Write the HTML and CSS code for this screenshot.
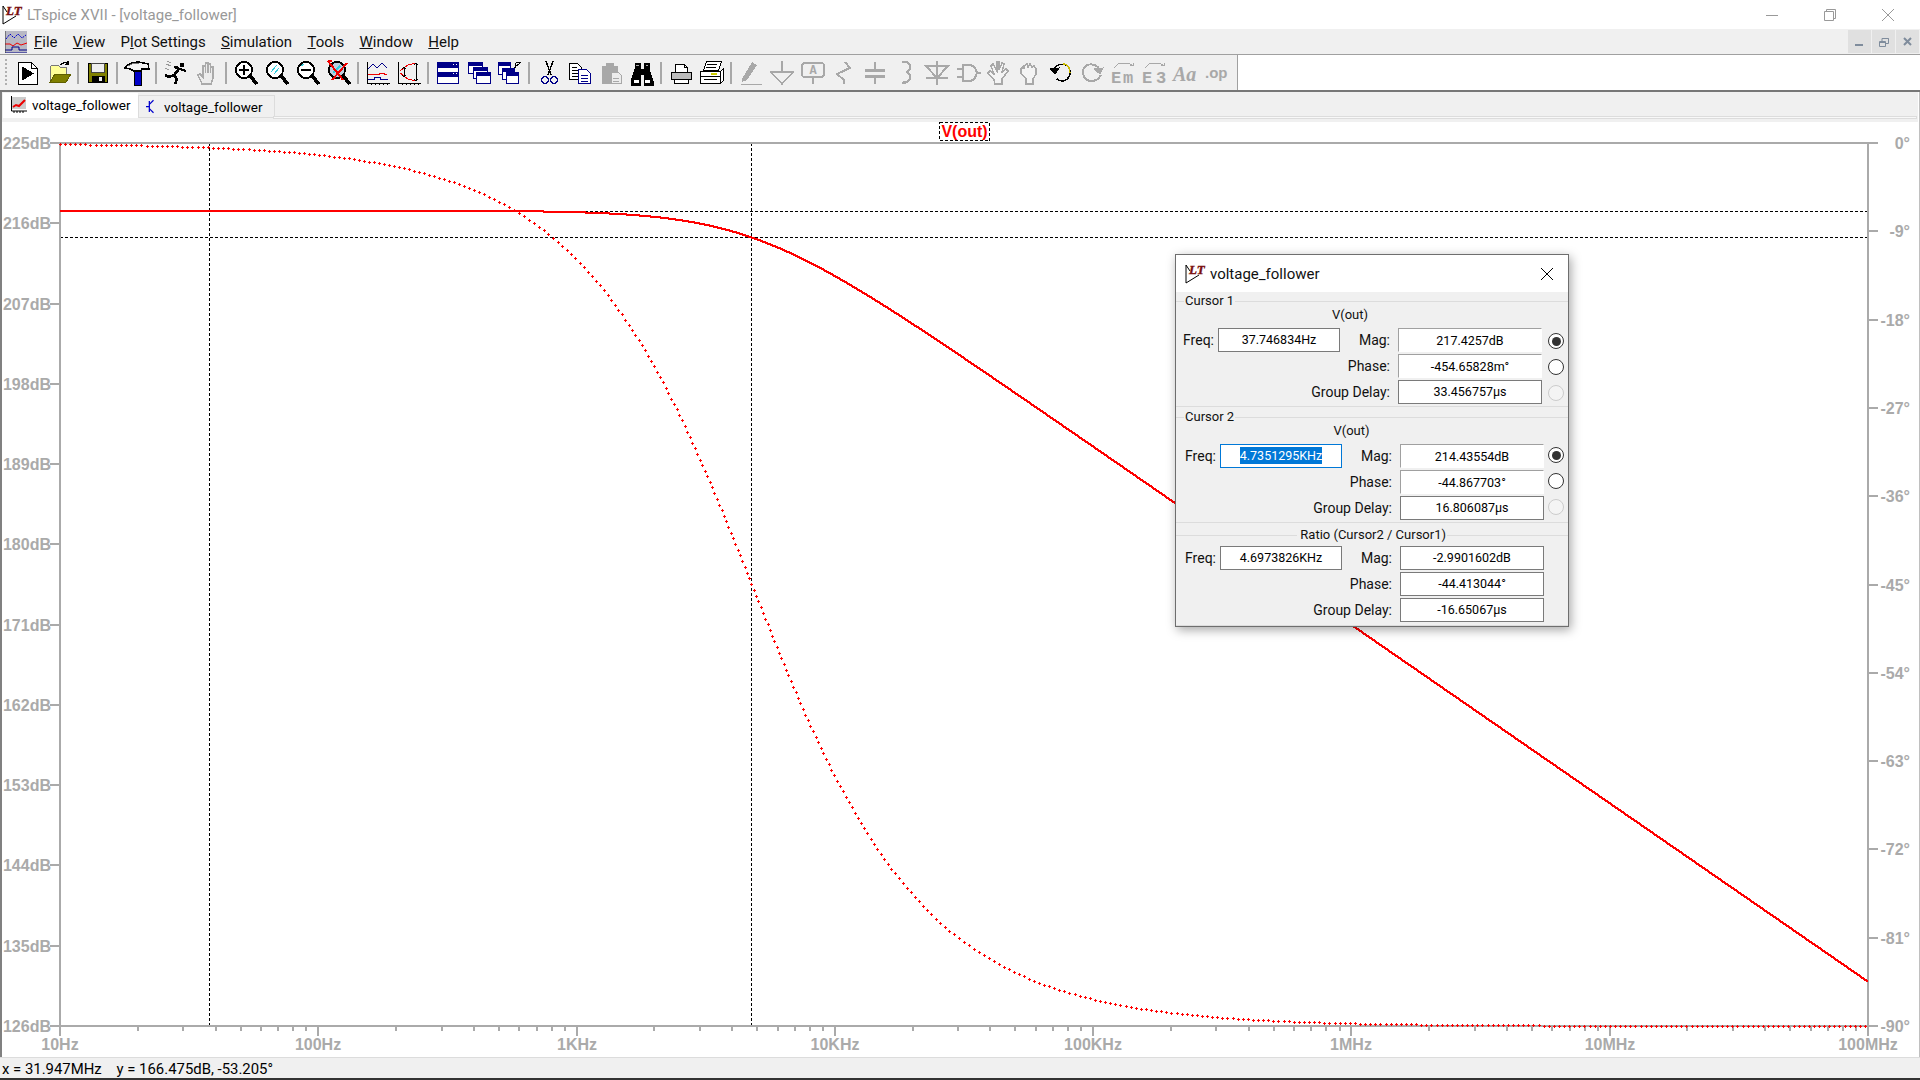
FILE: index.html
```html
<!DOCTYPE html>
<html lang="en">
<head>
    <meta charset="UTF-8">
    <title>LTspice XVII - [voltage_follower]</title>
    <link rel="stylesheet" href="styles.css">
</head>
<body>
    <div class="titlebar">
        <svg class="logo" viewBox="0 0 20 20"><path d="M1 1v18l13-8" fill="#fff" stroke="#000"/><path d="M1 1l4 6" stroke="#000"/><text x="4" y="10" class="logo-lt">LT</text></svg>
        <span class="title-text">LTspice XVII - [voltage_follower]</span>
        <div class="win-btns">
            <svg class="win-btn" viewBox="0 0 12 12"><path d="M0 6.500h12"/></svg>
            <svg class="win-btn" viewBox="0 0 12 12"><path d="M.5 2.500h9v9h-9zM2.500 2.500v-2h9v9h-2"/></svg>
            <svg class="win-btn" viewBox="0 0 12 12"><path d="M0 0l12 12M12 0L0 12"/></svg>
        </div>
    </div>

    <div class="menubar">
        <svg class="menu-ico" viewBox="0 0 22 22"><rect width="22" height="22" fill="#b8b8c4"/><path d="M1 8l4-5 4 4 4-4 4 4 4-3" stroke="#00c" stroke-dasharray="2 1" fill="none"/><path d="M0 13h5l3 2 4-3 4 2 6-2" stroke="#e00" fill="none"/><path d="M0 19h7v-3h7v3h8M0 22h22" stroke="#008" fill="none"/><path d="M0 0v22" stroke="#333"/></svg>
        <div class="menu-item"><u>F</u>ile</div>
        <div class="menu-item"><u>V</u>iew</div>
        <div class="menu-item">P<u>l</u>ot Settings</div>
        <div class="menu-item"><u>S</u>imulation</div>
        <div class="menu-item"><u>T</u>ools</div>
        <div class="menu-item"><u>W</u>indow</div>
        <div class="menu-item"><u>H</u>elp</div>
        <div class="mdi-btns">
            <div class="mdi-btn"><svg viewBox="0 0 10 10"><path d="M0 8h8" stroke-width="2"/></svg></div>
            <div class="mdi-btn"><svg viewBox="0 0 10 10"><path d="M.5 4.500h6v5h-6zM.5 5.500h6M3 4V1.500h6.500v5H7M3 1.500h6.500" stroke-width="1"/></svg></div>
            <div class="mdi-btn"><svg viewBox="0 0 10 10"><path d="M1 1l7 7M8 1L1 8" stroke-width="2"/></svg></div>
        </div>
    </div>

    <div class="toolbar-row">
        <div class="toolbar">
            <div class="grip"></div>
            <div class="tb"><svg class="ico" viewBox="0 0 26 26"><path d="M3.500 2.500h13l6 6v16h-19z" fill="#fff"/><path d="M16.500 2.500v6h6"/><path d="M7 7l11 6.500L7 20z" fill="#000"/></svg></div>
            <div class="tb"><svg class="ico" viewBox="0 0 26 26"><path d="M4 21V7l2-2h6l2 2h6v7" fill="#ffff99" stroke="#777"/><path d="M4 22l5-8h16l-5 8z" fill="#808000" stroke="#606000"/><path d="M15 5c2-3 5-3 7-1M22 1v3.500h-3.500" stroke-width="1.500"/></svg></div>
            <div class="sep"></div>
            <div class="tb"><svg class="ico" viewBox="0 0 26 26"><path d="M3.500 3.500h19v19h-19z" fill="#808000" stroke-width="1.500"/><rect x="6.500" y="3.500" width="13" height="9" fill="#eee" stroke="#444"/><rect x="7" y="16" width="12" height="6.500" fill="#000"/><rect x="14" y="17" width="3" height="4" fill="#eee" stroke="none"/></svg></div>
            <div class="sep"></div>
            <div class="tb"><svg class="ico" viewBox="0 0 26 26"><path d="M1 8C4 3 10 2 15 2l9 2 1 5h-7l-1 2H10C7 9 4 8 1 8z" fill="#f4f4f4" stroke-width="1.500"/><path d="M4 6c3-2 7-3 11-3" stroke="#777"/><rect x="10" y="11" width="7" height="14" fill="#0000c8" stroke="#000"/></svg></div>
            <div class="sep"></div>
            <div class="tb"><svg class="ico" viewBox="0 0 26 26"><path d="M3 4l5 2M2 8l4 2M4 1l4 2" stroke="#999"/><circle cx="19" cy="5" r="2" fill="#000"/><path d="M17 8L11 15l3 4-2 5M11 15l-5 2-4-2M16 8l-5-1M17 9l6 2" stroke-width="2.500"/></svg></div>
            <div class="tb"><svg class="ico" viewBox="0 0 26 26"><path d="M8 24L4 15l2-1 3 3V6h2.500v7V3h2.500v10V4h2.500v9V7h2.500v11l-2 6z" fill="#ececec" stroke="#aaa" stroke-width="1.500"/></svg></div>
            <div class="sep"></div>
            <div class="tb"><svg class="ico" viewBox="0 0 26 26"><circle cx="11" cy="10" r="8" fill="#fff" stroke-width="2"/><path d="M6 10h10M11 5v10" stroke-width="2.500"/><path d="M17 16l7 8" stroke-width="3.500"/></svg></div>
            <div class="tb"><svg class="ico" viewBox="0 0 26 26"><circle cx="11" cy="10" r="8" fill="#fff" stroke-width="2"/><path d="M7 12l6-7M10 14l5-6" stroke="#3cd"/><path d="M17 16l7 8" stroke-width="3.500"/></svg></div>
            <div class="tb"><svg class="ico" viewBox="0 0 26 26"><circle cx="11" cy="10" r="8" fill="#fff" stroke-width="2"/><path d="M6 10h10" stroke-width="2.500"/><path d="M6 6l3-2" stroke="#3cd"/><path d="M17 16l7 8" stroke-width="3.500"/></svg></div>
            <div class="tb"><svg class="ico" viewBox="0 0 26 26"><circle cx="11" cy="10" r="8" fill="#bcd" stroke-width="2"/><path d="M7 13l7-7" stroke="#3cd" stroke-width="2"/><path d="M17 16l7 8" stroke-width="3.500"/><path d="M2 1l15 19M21 3L6 20M2 1h4" stroke="#e00" stroke-width="2"/></svg></div>
            <div class="sep"></div>
            <div class="tb"><svg class="ico" viewBox="0 0 26 26"><path d="M2.500 2v21h22M6 23v2M10 23v2M14 23v2M18 23v2M22 23v2"/><path d="M3 9l5-5 4 4 5-5 5 5" stroke="#008"/><path d="M3 14h5l4 1 5-2 5 2" stroke="#e00"/><path d="M3 19h6v-2h6v2h8" stroke="#008"/></svg></div>
            <div class="tb"><svg class="ico" viewBox="0 0 26 26"><path d="M2.500 2v21h22M6 23v2M10 23v2M14 23v2M18 23v2M22 23v2"/><path d="M4 11l8-6 8-2M4 13l8 6 8 2" stroke="#e00"/><path d="M8 7v10M20 3v18M8 7l-2 2M8 7l2 2M8 17l-2-2M8 17l2-2M20 3l-2 2M20 3l2 2M20 21l-2-2M20 21l2-2"/></svg></div>
            <div class="sep"></div>
            <div class="tb"><svg class="ico nv" viewBox="0 0 26 26"><rect x="2.500" y="2.500" width="21" height="21" fill="#fff"/><rect x="3" y="3" width="20" height="5" fill="#008" stroke="none"/><rect x="3" y="12" width="20" height="5" fill="#008" stroke="none"/><path d="M18 4.500h1M21 4.500h1M18 13.500h1M21 13.500h1" stroke="#fff"/></svg></div>
            <div class="tb"><svg class="ico nv" viewBox="0 0 26 26"><rect x="2.500" y="2.500" width="14" height="11" fill="#fff"/><rect x="3" y="3" width="14" height="3" fill="#008" stroke="none"/><rect x="7.500" y="7.500" width="14" height="11" fill="#fff"/><rect x="8" y="8" width="14" height="3" fill="#008" stroke="none"/><rect x="10.500" y="12.500" width="14" height="11" fill="#fff"/><rect x="11" y="13" width="14" height="3" fill="#008" stroke="none"/></svg></div>
            <div class="tb"><svg class="ico nv" viewBox="0 0 26 26"><rect x="1.500" y="2.500" width="12" height="12" fill="#fff"/><rect x="2" y="3" width="12" height="3" fill="#008" stroke="none"/><rect x="5.500" y="8.500" width="12" height="11" fill="#fff"/><rect x="6" y="9" width="12" height="3" fill="#008" stroke="none"/><rect x="9.500" y="12.500" width="12" height="11" fill="#fff"/><rect x="10" y="13" width="12" height="3" fill="#008" stroke="none"/><path d="M17 7l7-5M24 2h-5M18 2v5" stroke="#000" transform="translate(0 .5)"/></svg></div>
            <div class="sep"></div>
            <div class="tb"><svg class="ico" viewBox="0 0 26 26"><path d="M10 1l5 14M17 1l-5 14" stroke-width="1.500"/><circle cx="9" cy="20" r="3.500" stroke="#008" stroke-width="1.500"/><circle cx="18" cy="20" r="3.500" stroke="#008" stroke-width="1.500"/></svg></div>
            <div class="tb"><svg class="ico" viewBox="0 0 26 26"><path d="M2.500 3.500h8l4 4v12h-12zM5 7h5M5 10h6M5 13h6M5 16h6" fill="#fff"/><path d="M11.500 9.500h8l4 4v10h-12z" fill="#fff" stroke="#008"/><path d="M14 15h7M14 18h7M14 21h7" stroke="#008"/></svg></div>
            <div class="tb"><svg class="ico" viewBox="0 0 26 26"><path d="M4 6h4V3h7v3h4v17H4z" fill="#a8a8a8" stroke="#a8a8a8"/><path d="M13.500 12.500h7l3 3v8h-10z" fill="#ececec" stroke="#a8a8a8"/><path d="M15 18h6M15 21h6" stroke="#a8a8a8"/></svg></div>
            <div class="tb"><svg class="ico" viewBox="0 0 26 26"><path d="M6 3h5v6h4V3h5v6l4 12v4h-9V14h-4v11H2v-4L6 9z" fill="#000"/><path d="M5 20h5v3H5zM16 20h5v3h-5z" fill="#fff" stroke="none"/><path d="M7 5h3M17 5h2" stroke="#aaa"/></svg></div>
            <div class="sep"></div>
            <div class="tb"><svg class="ico" viewBox="0 0 26 26"><path d="M7.500 4.500h9l3 3v5h-12z" fill="#fff"/><path d="M16.500 4.500v3h3"/><rect x="3.500" y="12.500" width="20" height="7" fill="#bbb"/><path d="M6.500 19.500h14v4h-14z" fill="#fff"/></svg></div>
            <div class="tb"><svg class="ico" viewBox="0 0 26 26"><path d="M7.500 1.500h15l-3 9h-15z" fill="#fff"/><path d="M8 4h10M7 7h10"/><path d="M1.500 11.500h20l3-3v12l-3 3h-20z" fill="#fff"/><path d="M1.500 16.500h20v7M21.500 11.500v5M5 19h13"/><path d="M12 14h6" stroke="#cc0" stroke-width="2"/></svg></div>
            <div class="sep"></div>
            <div class="tb"><svg class="ico gr" viewBox="0 0 26 26"><path d="M4 19L14 2l5 3-10 15-5 2z" fill="#a8a8a8" stroke="none"/><path d="M3 24h21"/></svg></div>
            <div class="tb"><svg class="ico gr" viewBox="0 0 26 26"><path d="M13 1v11M2 12h22L13 24z" stroke-width="1.500"/></svg></div>
            <div class="tb"><svg class="ico gr" viewBox="0 0 26 26"><rect x="2" y="3" width="22" height="14" rx="3" stroke-width="2"/><text x="13" y="14" class="ico-a">A</text><path d="M13 17v7" stroke-width="2"/></svg></div>
            <div class="tb"><svg class="ico gr" viewBox="0 0 26 26"><path d="M14 2l5 6L6 14l7 6v4" stroke-width="2"/></svg></div>
            <div class="tb"><svg class="ico gr" viewBox="0 0 26 26"><path d="M13 2v7M13 17v7" stroke-width="2"/><path d="M3 10h20M3 16h20" stroke-width="3"/></svg></div>
            <div class="tb"><svg class="ico gr" viewBox="0 0 26 26"><path d="M9 2h5l3 3v4l-3 3 3 3v4l-3 3-5 1" stroke-width="2.500"/></svg></div>
            <div class="tb"><svg class="ico gr" viewBox="0 0 26 26"><path d="M13 1v24M2 18h22M2 6h22L13 18z" stroke-width="2"/></svg></div>
            <div class="tb"><svg class="ico gr" viewBox="0 0 26 26"><path d="M8 5h6c5 0 7 4 8 8-1 4-3 8-8 8H8zM2 9h6M2 17h6M22 13h4" stroke-width="2"/></svg></div>
            <div class="tb"><svg class="ico gr" viewBox="0 0 26 26"><path d="M9 24l-1-4-6-7 2-2 4 3-3-8 2-2 4 7V2h2v8l3-7 2 1-2 8 4-3 2 2-6 8v5z" fill="#f4f4f4" stroke-width="1.500"/></svg></div>
            <div class="tb"><svg class="ico gr" viewBox="0 0 26 26"><path d="M9 24v-5l-5-6V9l2-2 1 2V6l3-2 1 3 2-3 2 3 2-1 2 3v5l-3 5v5z" fill="#f4f4f4" stroke-width="1.500"/></svg></div>
            <div class="tb"><svg class="ico" viewBox="0 0 26 26"><path d="M6 9c3-6 12-6 15-1 3 6-1 13-7 13-2 0-4-1-5-2" stroke-width="1.500"/><path d="M15 4c3 0 5 2 6 4l1 5" stroke="#cb0" stroke-width="1.500"/><path d="M2 9l9-1-4 6z" fill="#000"/></svg></div>
            <div class="tb"><svg class="ico gr" viewBox="0 0 26 26"><path d="M20 9C17 3 8 3 5 8c-3 6 1 13 7 13 4 0 8-2 10-6" stroke-width="2"/><path d="M24 8l-9 1 6 5z" fill="#a8a8a8"/></svg></div>
            <div class="tb"><svg class="ico gr" viewBox="0 0 26 26"><path d="M4 8l5-5h10l4 3M23 6l-3-1M23 6v-3"/><text x="1" y="23" class="ico-t">E</text><text x="13" y="23" class="ico-t">m</text></svg></div>
            <div class="tb"><svg class="ico gr" viewBox="0 0 26 26"><path d="M4 8l5-5h10l4 3M23 6l-3-1M23 6v-3"/><text x="1" y="23" class="ico-t">E</text><text x="15" y="23" class="ico-t">3</text></svg></div>
            <div class="tb"><svg class="ico gr" viewBox="0 0 26 26"><text x="1" y="21" class="ico-aa">Aa</text></svg></div>
            <div class="tb"><svg class="ico gr" viewBox="0 0 26 26"><text x="2" y="18" class="ico-op">.op</text></svg></div>
        </div>
    </div>

    <div class="mdi">
        <div class="tabs">
            <div class="tab tab-on">
                <svg class="tab-ico" viewBox="0 0 17 17"><rect x="2" y="1" width="14" height="12" fill="#ccc"/><path d="M1.500 0v15h16M4 15v2M7 15v2M10 15v2M13 15v2" stroke="#000" fill="none"/><path d="M3 11l3-2 3 1 6-6" stroke="#e00" stroke-width="2" fill="none"/></svg>
                voltage_follower
            </div>
            <div class="tab">
                <svg class="tab-ico tab-ico-t" viewBox="0 0 12 17"><path d="M9 1L4 6v5l5 5M4 2v13M0 8.500h4" stroke="#00c" stroke-width="1.500" fill="none"/></svg>
                voltage_follower
            </div>
            <div class="tab-fill"></div>
        </div>
        <div class="plot">
            <svg id="plot-svg" class="plot-svg" viewBox="0 122 1920 935">
                <g class="dash"><path id="cursors" d=""/></g>
                <g class="axes"><path id="axes" d=""/></g>
                <path id="mag" class="mag" d=""/>
                <path id="phase" class="phase" d=""/>
                <rect class="vout-box" x="939.500" y="122.500" width="50" height="18"/>
                <text class="vout" x="964.500" y="137">V(out)</text>
                <g class="lbl lbl-l">
                    <text x="51" y="149">225dB</text><text x="51" y="229">216dB</text><text x="51" y="310">207dB</text><text x="51" y="390">198dB</text><text x="51" y="470">189dB</text><text x="51" y="550">180dB</text><text x="51" y="631">171dB</text><text x="51" y="711">162dB</text><text x="51" y="791">153dB</text><text x="51" y="871">144dB</text><text x="51" y="952">135dB</text><text x="51" y="1032">126dB</text>
                </g>
                <g class="lbl lbl-r">
                    <text x="1910" y="149">0°</text><text x="1910" y="237">-9°</text><text x="1910" y="326">-18°</text><text x="1910" y="414">-27°</text><text x="1910" y="502">-36°</text><text x="1910" y="591">-45°</text><text x="1910" y="679">-54°</text><text x="1910" y="767">-63°</text><text x="1910" y="855">-72°</text><text x="1910" y="944">-81°</text><text x="1910" y="1032">-90°</text>
                </g>
                <g class="lbl lbl-b">
                    <text x="60" y="1050">10Hz</text><text x="318" y="1050">100Hz</text><text x="577" y="1050">1KHz</text><text x="835" y="1050">10KHz</text><text x="1093" y="1050">100KHz</text><text x="1351" y="1050">1MHz</text><text x="1610" y="1050">10MHz</text><text x="1868" y="1050">100MHz</text>
                </g>
            </svg>
        </div>

        <div class="dlg">
            <div class="dlg-title">
                <svg class="dlg-logo" viewBox="0 0 20 20"><path d="M1 1v18l13-8" fill="#fff" stroke="#000"/><path d="M1 1l4 6" stroke="#000"/><text x="4" y="10" class="logo-lt">LT</text></svg>
                <span class="dlg-name">voltage_follower</span>
                <svg class="dlg-x" viewBox="0 0 12 12"><path d="M0 0l12 12M12 0L0 12"/></svg>
            </div>
            <div class="group">
                <div class="legend"><span>Cursor 1</span></div>
                <div class="signal">V(out)</div>
                <div class="rows">
                    <div class="lab">Freq:</div><div class="val val-edit">37.746834Hz</div><div class="lab lab-m">Mag:</div><div class="val val-sunk">217.4257dB</div><div class="radio radio-on"></div>
                    <div class="lab lab-w">Phase:</div><div class="val val-sunk">-454.65828m°</div><div class="radio"></div>
                    <div class="lab lab-w">Group Delay:</div><div class="val val-edit">33.456757µs</div><div class="radio radio-off"></div>
                </div>
            </div>
            <div class="group group-2">
                <div class="legend"><span>Cursor 2</span></div>
                <div class="signal">V(out)</div>
                <div class="rows rows-2">
                    <div class="lab">Freq:</div><div class="val val-edit val-focus"><span class="sel">4.7351295KHz</span></div><div class="lab lab-m">Mag:</div><div class="val val-sunk">214.43554dB</div><div class="radio radio-on"></div>
                    <div class="lab lab-w">Phase:</div><div class="val val-sunk">-44.867703°</div><div class="radio"></div>
                    <div class="lab lab-w">Group Delay:</div><div class="val val-edit">16.806087µs</div><div class="radio radio-off"></div>
                </div>
            </div>
            <div class="group group-3">
                <div class="legend legend-mid"><span>Ratio (Cursor2 / Cursor1)</span></div>
                <div class="rows rows-2">
                    <div class="lab">Freq:</div><div class="val val-edit">4.6973826KHz</div><div class="lab lab-m">Mag:</div><div class="val val-edit">-2.9901602dB</div><div class="blank"></div>
                    <div class="lab lab-w">Phase:</div><div class="val val-edit">-44.413044°</div><div class="blank"></div>
                    <div class="lab lab-w">Group Delay:</div><div class="val val-edit">-16.65067µs</div><div class="blank"></div>
                </div>
            </div>
        </div>
    </div>

    <div class="status">x = 31.947MHz&nbsp;&nbsp;&nbsp; y = 166.475dB, -53.205°</div>
    <div class="bottom-edge"></div>
    <script src="plot.js"></script>
</body>
</html>
```

FILE: styles.css
```css
html, body {
    height: 100%;
    margin: 0;
    overflow: hidden;
}
body {
    display: flex;
    flex-direction: column;
    background: #fff;
    color: #000;
    font-family: Roboto, "Liberation Sans", sans-serif;
    font-size: 13px;
}

/* title bar */
.titlebar {
    height: 29px;
    display: flex;
    align-items: center;
    background: #fff;
    flex-shrink: 0;
}
.logo {
    width: 20px;
    height: 20px;
    margin-left: 2px;
    margin-right: 5px;
    overflow: visible;
}
.logo-lt {
    font-family: "Liberation Serif", serif;
    font-weight: bold;
    font-style: italic;
    font-size: 13px;
    fill: #7a1010;
    stroke: #7a1010;
    stroke-width: 0.4;
}
.title-text {
    color: #999;
    font-size: 15px;
}
.win-btns {
    margin-left: auto;
    display: flex;
    align-items: center;
    gap: 46px;
    margin-right: 26px;
}
.win-btn {
    width: 12px;
    height: 12px;
    fill: none;
    stroke: #999;
}

/* menu */
.menubar {
    height: 26px;
    flex-shrink: 0;
    box-sizing: border-box;
    display: flex;
    align-items: center;
    background: #f0f0f0;
    border-bottom: 1px solid #a0a0a0;
    font-size: 15px;
    padding-left: 5px;
}
.menu-ico {
    width: 22px;
    height: 22px;
    margin-right: 7px;
}
.menu-item {
    margin-right: 15.3px;
    color: #111;
}
.mdi-btns {
    margin-left: auto;
    display: flex;
    gap: 1px;
    margin-right: 1px;
}
.mdi-btn {
    width: 23px;
    height: 23px;
    background: #e0e0e0;
    display: flex;
    align-items: center;
    justify-content: center;
}
.mdi-btn svg {
    width: 10px;
    height: 10px;
    fill: none;
    stroke: #7f8c9c;
}

/* toolbar */
.toolbar-row {
    height: 37px;
    flex-shrink: 0;
    box-sizing: border-box;
    border-bottom: 2px solid #777;
    background: #fff;
    display: flex;
}
.toolbar {
    width: 1238px;
    box-sizing: border-box;
    background: #f0f0f0;
    border-right: 1px solid #a0a0a0;
    display: flex;
    align-items: center;
}
.grip {
    width: 2px;
    height: 28px;
    margin: 0 5px;
    background: repeating-linear-gradient(to bottom, #b0b0b0 0, #b0b0b0 2px, transparent 2px, transparent 4px);
}
.tb {
    width: 31px;
    height: 26px;
    display: flex;
    justify-content: center;
}
.sep {
    width: 2px;
    height: 22px;
    margin: 0 3px;
    background: #a8a8a8;
}
.ico {
    width: 26px;
    height: 26px;
    fill: none;
    stroke: #000;
    shape-rendering: crispEdges;
    overflow: visible;
}
.ico.gr {
    stroke: #a8a8a8;
}
.ico.nv {
    stroke: #008;
}
.ico-t, .ico-a, .ico-aa, .ico-op {
    stroke: none;
    fill: #a8a8a8;
    font-weight: bold;
}
.ico-t {
    font-family: "Liberation Mono", monospace;
    font-size: 17px;
}
.ico-a {
    font-family: "Liberation Mono", monospace;
    font-size: 12px;
    text-anchor: middle;
}
.ico-aa {
    font-family: "Liberation Serif", serif;
    font-style: italic;
    font-size: 20px;
}
.ico-op {
    font-family: "Liberation Sans", sans-serif;
    font-size: 15px;
}

/* child window */
.mdi {
    flex: 1;
    min-height: 0;
    display: flex;
    flex-direction: column;
    position: relative;
    box-shadow: inset 2px 0 0 #808080, inset -1px 0 0 #c0c0c0;
}
.tabs {
    height: 30px;
    flex-shrink: 0;
    display: flex;
    align-items: flex-start;
    background: #f0f0f0;
    margin-left: 2px;
    margin-right: 2px;
    padding-left: 1px;
    font-size: 13.5px;
}
.tab {
    height: 21px;
    margin-top: 3px;
    width: 128px;
    box-sizing: content-box;
    padding-left: 7px;
    display: flex;
    align-items: center;
    gap: 8px;
    border: 1px solid #dcdcdc;
    white-space: nowrap;
    margin-right: -2px;
}
.tab-on {
    height: 25px;
    margin-top: 1px;
    padding-left: 7px;
    gap: 5px;
    background: #fff;
    border: 0;
    padding-bottom: 2px;
    box-sizing: border-box;
    width: 135px;
    margin-right: 0;
}
.tab-ico {
    width: 17px;
    height: 17px;
}
.tab-ico-t {
    width: 10px;
}
.tab-fill {
    flex: 1;
    box-sizing: border-box;
    height: 3px;
    margin-top: 24px;
    border: 1px solid #dcdcdc;
    background: #f8f8f8;
    margin-right: 1px;
}

/* plot */
.plot {
    flex: 1;
    min-height: 0;
}
.plot-svg {
    display: block;
    width: 1920px;
    height: 935px;
}
.axes path {
    fill: none;
    stroke: #aaa;
    stroke-width: 2;
    shape-rendering: crispEdges;
}
.dash path {
    fill: none;
    stroke: #000;
    stroke-dasharray: 3 2;
    shape-rendering: crispEdges;
}
.mag {
    fill: none;
    stroke: #f00;
    stroke-width: 2;
    shape-rendering: crispEdges;
}
.phase {
    fill: none;
    stroke: #f00;
    shape-rendering: crispEdges;
}
.vout-box {
    fill: #fff;
    stroke: #000;
    stroke-dasharray: 3 2;
    shape-rendering: crispEdges;
}
.vout {
    fill: #f00;
    font-family: "Liberation Sans", sans-serif;
    font-weight: bold;
    font-size: 16px;
    text-anchor: middle;
}
.lbl text {
    fill: #aaa;
    font-family: "Liberation Sans", sans-serif;
    font-weight: bold;
    font-size: 16px;
}
.lbl-l text, .lbl-r text {
    text-anchor: end;
}
.lbl-b text {
    text-anchor: middle;
}

/* cursor dialog */
.dlg {
    position: absolute;
    left: 1175px;
    top: 162px; /* 254 on screen */
    width: 394px;
    box-sizing: border-box;
    background: #f0f0f0;
    border: 1px solid #6e6e6e;
    box-shadow: 2px 3px 10px rgba(0, 0, 0, 0.35);
    font-size: 13px;
    color: #111;
}
.dlg-title {
    height: 37px;
    display: flex;
    align-items: center;
    background: #fff;
    padding-left: 9px;
}
.dlg-logo {
    width: 20px;
    height: 20px;
    margin-right: 5px;
    overflow: visible;
}
.dlg-name {
    font-size: 15px;
}
.dlg-x {
    width: 12px;
    height: 12px;
    margin-left: auto;
    margin-right: 15px;
    fill: none;
    stroke: #000;
}
.group {
    padding: 2px 0 2px;
    border-bottom: 1px solid #dcdcdc;
}
.group-2 {
    padding-top: 3px;
}
.group-3 {
    padding-top: 5px;
    padding-bottom: 3px;
}
.legend {
    height: 14px;
    line-height: 14px;
    display: flex;
    align-items: center;
}
.legend::before, .legend::after {
    content: "";
    height: 1px;
    background: #dcdcdc;
}
.legend::before {
    width: 8px;
}
.legend::after {
    flex: 1;
}
.legend span {
    padding: 0 1px;
}
.legend-mid {
    margin-bottom: 4px;
}
.legend-mid::before {
    flex: 1;
    margin-right: 2px;
}
.legend-mid::after {
    flex: 0 0 121px;
}
.signal {
    height: 14px;
    line-height: 14px;
    margin-bottom: 6px;
    padding-right: 44px;
    text-align: center;
}
.group-2 .signal {
    padding-right: 41px;
}
.rows {
    display: grid;
    grid-template-columns: 42px 122px 58px 144px 26px;
    grid-auto-rows: 24px;
    row-gap: 2px;
}
.rows-2 {
    padding-left: 2px;
    grid-template-columns: 42px 122px 58px 144px 24px;
}
.lab {
    font-size: 14px;
    line-height: 24px;
    text-align: right;
    padding-right: 4px;
    white-space: nowrap;
}
.lab-m {
    padding-right: 8px;
}
.lab-w {
    grid-column: 1 / 4;
    padding-right: 8px;
}
.val {
    box-sizing: border-box;
    background: #fff;
    text-align: center;
    line-height: 22px;
    font-size: 12.5px;
    color: #000;
}
.val-edit {
    border: 1px solid #7a7a7a;
}
.val-sunk {
    border: 1px solid #fff;
    border-top-color: #a0a0a0;
    border-left-color: #a0a0a0;
    line-height: 24px;
}
.val-focus {
    border-color: #0078d7;
}
.sel {
    background: #0078d7;
    color: #fff;
    padding: 1px 0;
}
.radio {
    width: 16px;
    height: 16px;
    box-sizing: border-box;
    margin: 5px 0 0 6px;
    border: 1.5px solid #333;
    border-radius: 50%;
    background: #fff;
    display: flex;
    align-items: center;
    justify-content: center;
}
.rows-2 .radio {
    margin: 3px 0 0 4px;
}
.radio-on::after {
    content: "";
    width: 9px;
    height: 9px;
    border-radius: 50%;
    background: #333;
}
.radio-off {
    border-color: #ccc;
    background: #f4f4f4;
}

/* status bar */
.status {
    height: 21px;
    flex-shrink: 0;
    box-sizing: border-box;
    border-top: 1px solid #dcdcdc;
    background: #f0f0f0;
    padding: 3px 0 0 2px;
    line-height: 17px;
    font-size: 14.9px;
    white-space: nowrap;
}
.bottom-edge {
    height: 2px;
    flex-shrink: 0;
    background: #333;
}
```

FILE: plot.js
```js
// plot area, in page coordinates (the svg viewBox matches the screen)
const X0 = 60, X1 = 1868, Y0 = 143, Y1 = 1026;
const DECADE = (X1 - X0) / 7;
const DB_PX = (Y1 - Y0) / 99;
const DEG_PX = (Y1 - Y0) / 90;
const FC = 4757;

function freqAt(x) {
    return Math.pow(10, 1 + (x - X0) / DECADE);
}

function magY(f) {
    const db = 217.4257 - 10 * Math.log10(1 + (f / FC) * (f / FC));
    return Y0 + (225 - db) * DB_PX;
}

function phaseY(f) {
    return Y0 + Math.atan(f / FC) * 180 / Math.PI * DEG_PX;
}

function drawAxes() {
    let d = `M50 ${Y0}H1878M50 ${Y1}H1878M${X0} ${Y0}V1036M${X1} ${Y0}V1036`;
    for (let i = 0; i < 12; i++) {
        const y = Math.round(Y0 + i * 9 * DB_PX);
        d += `M50 ${y}H${X0}`;
    }
    for (let i = 0; i < 11; i++) {
        const y = Math.round(Y0 + i * 9 * DEG_PX);
        d += `M${X1} ${y}H1878`;
    }
    for (let dec = 0; dec < 7; dec++) {
        for (let m = 1; m < 10; m++) {
            const x = Math.round(X0 + (dec + Math.log10(m)) * DECADE);
            d += `M${x} ${Y1}V${m === 1 ? 1036 : 1031}`;
        }
    }
    document.getElementById('axes').setAttribute('d', d);
}

function drawCursors() {
    const d = `M209.5 ${Y0}V${Y1}M751.5 ${Y0}V${Y1}M${X0} 211.5H${X1}M${X0} 237.5H${X1}`;
    document.getElementById('cursors').setAttribute('d', d);
}

function drawMag() {
    let d = '';
    for (let x = X0; x <= X1; x++) {
        d += (x === X0 ? 'M' : 'L') + x + ' ' + Math.round(magY(freqAt(x)));
    }
    document.getElementById('mag').setAttribute('d', d);
}

function drawPhase() {
    // LTspice draws this trace as little plus marks, about 5px apart in x
    let d = '';
    let px = X0, py = phaseY(freqAt(X0)), lastX = X0 - 5, run = 6;
    for (let x = X0; x <= X1 - 2; x += 0.1) {
        const y = phaseY(freqAt(x));
        run += Math.hypot(x - px, y - py);
        px = x;
        py = y;
        if (x - lastX >= 5 || run >= 6) {
            run = 0;
            lastX = x;
            const cx = Math.round(x), cy = Math.round(y);
            d += `M${cx - 1} ${cy + 0.5}h3M${cx + 0.5} ${cy - 1}v3`;
        }
    }
    document.getElementById('phase').setAttribute('d', d);
}

drawCursors();
drawAxes();
drawMag();
drawPhase();
```
